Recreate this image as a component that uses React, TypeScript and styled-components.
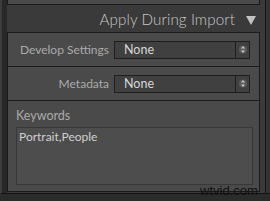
import styled, { createGlobalStyle } from "styled-components";

const Global = createGlobalStyle`
  html, body {
    margin: 0;
    padding: 0;
    background: #2b2b2b;
  }
  * { box-sizing: border-box; }
`;

const Frame = styled.div`
  position: relative;
  width: 270px;
  height: 201px;
  overflow: hidden;
  display: flex;
  background: #2b2b2b;
  font-family: Lato, "Open Sans", "Liberation Sans", sans-serif;
`;

const Gutter = styled.div`
  width: 7px;
  height: 194px;
  border-left: 2px solid #3c3c3c;
  background: #282828;
  border-bottom: 1px solid #141414;
`;

const Column = styled.div`
  width: 253px;
  height: 194px;
  display: flex;
  flex-direction: column;
  background: #3a3a3a;
  border-bottom: 1px solid #141414;
`;

const RightEdge = styled.div`
  flex: 1;
  height: 194px;
  display: flex;
  border-bottom: 1px solid #141414;
  & > div:first-child {
    width: 5px;
    background: #3a3a3a;
  }
  & > div:nth-child(2) {
    width: 1px;
    background: #161616;
  }
  & > div:last-child {
    flex: 1;
    background: #333;
  }
`;

const Panel = styled.div<{ h: number; top?: boolean }>`
  height: ${({ h }) => h}px;
  background: #4a4a4a;
  border: 1px solid #1b1b1b;
  border-top-width: ${({ top }) => (top ? 0 : 1)}px;
  flex-shrink: 0;
`;

const Stack = styled.div`
  display: flex;
  flex-direction: column;
  & > div + div {
    border-top-width: 0;
  }
`;

const Header = styled.div`
  height: 27px;
  display: flex;
  align-items: center;
  justify-content: flex-end;
  gap: 11px;
  padding-right: 4px;
  padding-top: 1px;
  color: #c8c8c8;
  font-size: 15.2px;
  font-weight: 300;
  letter-spacing: 0.1px;
`;

const Triangle = styled.span`
  width: 0;
  height: 0;
  border-left: 5px solid transparent;
  border-right: 5px solid transparent;
  border-top: 9px solid #c2c2c2;
  margin-top: 2px;
`;

const Row = styled.div`
  height: 100%;
  display: flex;
  align-items: center;
  gap: 5px;
`;

const Label = styled.div`
  width: 101px;
  text-align: right;
  color: #ababab;
  font-size: 12px;
`;

const Select = styled.div`
  width: 136px;
  height: 18px;
  display: flex;
  background: #404040;
  border: 1px solid #1e1e1e;
  color: #d6d6d6;
  font-size: 12.5px;
`;

const SelectValue = styled.div`
  flex: 1;
  padding-left: 9px;
  line-height: 16px;
`;

const Stepper = styled.div`
  width: 14px;
  border-left: 1px solid #1e1e1e;
  display: flex;
  align-items: center;
  justify-content: center;
`;

const KeywordsBody = styled.div`
  padding: 6px 6px 0 8px;
  display: flex;
  flex-direction: column;
  gap: 3px;
`;

const KeywordsLabel = styled.div`
  color: #ababab;
  font-size: 12.5px;
  line-height: 17px;
`;

const KeywordsBox = styled.div`
  height: 58px;
  border: 1px solid #383838;
  background: #4d4d4d;
  color: #cfcfcf;
  font-size: 12px;
  padding: 1px 2px;
`;

const Watermark = styled.div`
  position: absolute;
  left: 200px;
  top: 183px;
  color: #111;
  font-size: 13px;
  font-family: "Liberation Sans", sans-serif;
`;

const Arrows = () => (
  <svg width="8" height="11" viewBox="0 0 8 11">
    <circle cx="4" cy="5.5" r="4" fill="#5a5a5a" />
    <path d="M2 4.5 L4 2 L6 4.5 Z M2 6.5 L4 9 L6 6.5 Z" fill="#c8c8c8" />
  </svg>
);

const Field = ({ label }: { label: string }) => (
  <Row>
    <Label>{label}</Label>
    <Select>
      <SelectValue>None</SelectValue>
      <Stepper>
        <Arrows />
      </Stepper>
    </Select>
  </Row>
);

export default function App() {
  return (
    <Frame>
      <Global />
      <Gutter />
      <Column>
        <Panel h={5} top />
        <Header>
          Apply During Import
          <Triangle />
        </Header>
        <Stack>
          <Panel h={35}>
            <Field label="Develop Settings" />
          </Panel>
          <Panel h={34}>
            <Field label="Metadata" />
          </Panel>
          <Panel h={91}>
            <KeywordsBody>
              <KeywordsLabel>Keywords</KeywordsLabel>
              <KeywordsBox>Portrait,People</KeywordsBox>
            </KeywordsBody>
          </Panel>
        </Stack>
      </Column>
      <RightEdge>
        <div />
        <div />
        <div />
      </RightEdge>
      <Watermark>wtvid.com</Watermark>
    </Frame>
  );
}
